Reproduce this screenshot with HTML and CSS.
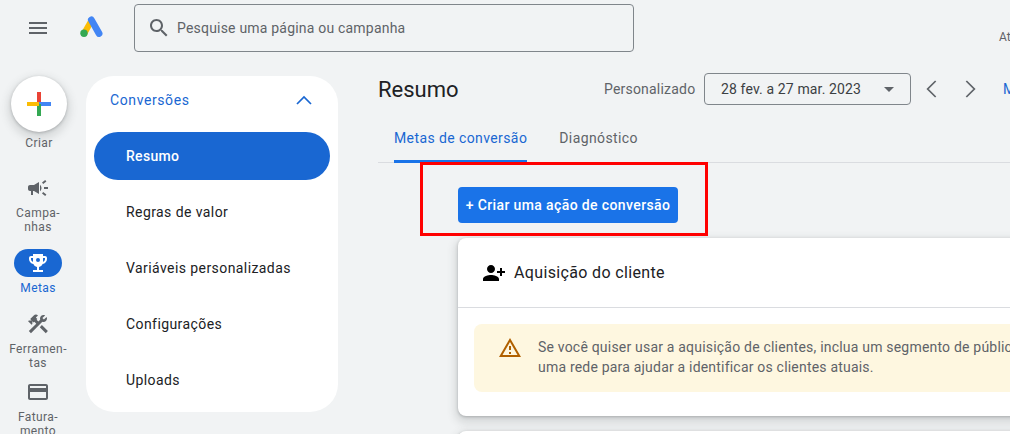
FILE: index.html
```html
<!DOCTYPE html>
<html lang="pt-BR">
<head>
    <meta charset="UTF-8">
    <meta name="viewport" content="width=device-width, initial-scale=1.0">
    <title>Resumo - Conversões</title>
    <link rel="stylesheet" href="styles.css">
</head>
<body>
    <header class="topbar">
        <button class="menu-btn" aria-label="Menu">
            <svg viewBox="0 0 24 24" width="24" height="24"><path d="M3 18h18v-2H3v2zm0-5h18v-2H3v2zm0-7v2h18V6H3z"/></svg>
        </button>
        <svg class="ads-logo" viewBox="0 0 24 24" width="24" height="24">
            <path d="M9.6 3.6 2.2 16.6l5.4 3 7.2-13z" fill="#fbbc04"/>
            <path d="M9.4 5.6a3.4 3.4 0 0 1 5.9-3.4l7.7 13.6a3.4 3.4 0 0 1-5.9 3.4z" fill="#4285f4"/>
            <circle cx="5" cy="17.3" r="3.7" fill="#34a853"/>
        </svg>
        <div class="search">
            <svg viewBox="0 0 24 24" width="24" height="24"><path d="M15.5 14h-.79l-.28-.27C15.41 12.59 16 11.11 16 9.5 16 5.91 13.09 3 9.5 3S3 5.91 3 9.5 5.91 16 9.5 16c1.61 0 3.09-.59 4.23-1.57l.27.28v.79l5 4.99L20.49 19l-4.99-5zm-6 0C7.01 14 5 11.99 5 9.5S7.01 5 9.5 5 14 7.01 14 9.5 11.99 14 9.5 14z"/></svg>
            <span>Pesquise uma página ou campanha</span>
        </div>
        <span class="updated">Atualizado</span>
    </header>

    <div class="layout">
        <!-- left icon rail -->
        <nav class="rail">
            <div class="create">
                <div class="create-btn">
                    <svg viewBox="0 0 24 24" width="24" height="24">
                        <rect x="10" y="0" width="4" height="12" fill="#ea4335"/>
                        <rect x="12" y="10" width="12" height="4" fill="#4285f4"/>
                        <rect x="10" y="12" width="4" height="12" fill="#34a853"/>
                        <rect x="0" y="10" width="12" height="4" fill="#fbbc04"/>
                    </svg>
                </div>
                <span>Criar</span>
            </div>
            <a class="rail-item campaigns">
                <span class="rail-icon"><svg viewBox="0 0 24 24" width="24" height="24"><path d="M18 11v2h4v-2h-4zm-2 6.61c.96.71 2.21 1.65 3.2 2.39.4-.53.8-1.07 1.2-1.6-.99-.74-2.24-1.68-3.2-2.4-.4.54-.8 1.08-1.2 1.61zM20.4 5.6c-.4-.53-.8-1.07-1.2-1.6-.99.74-2.24 1.68-3.2 2.4.4.53.8 1.07 1.2 1.6.96-.72 2.21-1.65 3.2-2.4zM4 9c-1.1 0-2 .9-2 2v2c0 1.1.9 2 2 2h1v4h2v-4h1l5 3V6L8 9H4zm11.5 3c0-1.33-.58-2.53-1.5-3.35v6.69c.92-.81 1.5-2.01 1.5-3.34z"/></svg></span>
                <span>Campa-<br>nhas</span>
            </a>
            <a class="rail-item active">
                <span class="rail-icon"><svg viewBox="0 0 24 24" width="24" height="24"><path fill-rule="evenodd" d="M19 5h-2V3H7v2H5c-1.1 0-2 .9-2 2v1c0 2.55 1.92 4.63 4.39 4.94.63 1.5 1.98 2.63 3.61 2.96V19H7v2h10v-2h-4v-3.1c1.63-.33 2.98-1.46 3.61-2.96C19.08 12.63 21 10.55 21 8V7c0-1.1-.9-2-2-2zM5 8V7h2v3.82C5.84 10.4 5 9.3 5 8zm14 0c0 1.3-.84 2.4-2 2.82V7h2v1zM12 7a2 2 0 1 0 0 4 2 2 0 0 0 0-4z"/></svg></span>
                <span>Metas</span>
            </a>
            <a class="rail-item">
                <span class="rail-icon"><svg viewBox="0 0 24 24" width="24" height="24"><path d="M13.783 15.172l2.121-2.121 5.996 5.996-2.121 2.121zM17.5 10c1.93 0 3.5-1.57 3.5-3.5 0-.58-.16-1.12-.41-1.6l-2.7 2.7-1.49-1.49 2.7-2.7c-.48-.25-1.02-.41-1.6-.41C15.57 3 14 4.57 14 6.5c0 .41.08.8.21 1.16l-1.85 1.85-1.78-1.78.71-.71-1.41-1.41L12 3.49c-1.17-1.17-3.07-1.17-4.24 0L4.22 7.03l1.41 1.41H2.81l-.71.71 3.54 3.54.71-.71V9.15l1.41 1.41.71-.71 1.78 1.78-7.41 7.41 2.12 2.12L16.34 9.79c.36.13.75.21 1.16.21z"/></svg></span>
                <span>Ferramen-<br>tas</span>
            </a>
            <a class="rail-item billing">
                <span class="rail-icon"><svg viewBox="0 0 24 24" width="24" height="24"><path d="M20 4H4c-1.11 0-1.99.89-1.99 2L2 18c0 1.11.89 2 2 2h16c1.11 0 2-.89 2-2V6c0-1.11-.89-2-2-2zm0 14H4v-6h16v6zm0-10H4V6h16v2z"/></svg></span>
                <span>Fatura-<br>mento</span>
            </a>
        </nav>

        <!-- section menu -->
        <aside class="side-menu">
            <div class="side-title">
                <span>Conversões</span>
                <svg viewBox="0 0 24 24" width="24" height="24"><path d="M5 16l7-7 7 7"/></svg>
            </div>
            <a class="side-link selected">Resumo</a>
            <a class="side-link">Regras de valor</a>
            <a class="side-link">Variáveis personalizadas</a>
            <a class="side-link">Configurações</a>
            <a class="side-link">Uploads</a>
        </aside>

        <main class="content">
            <div class="title-row">
                <h1>Resumo</h1>
                <div class="date-tools">
                    <span class="date-label">Personalizado</span>
                    <div class="date-box">
                        <span>28 fev. a 27 mar. 2023</span>
                        <i class="caret"></i>
                    </div>
                    <svg class="arrow" viewBox="0 0 24 24" width="32" height="32"><path d="M15.5 6l-6 6 6 6"/></svg>
                    <svg class="arrow" viewBox="0 0 24 24" width="32" height="32"><path d="M8.5 6l6 6-6 6"/></svg>
                    <a class="more">Mais</a>
                </div>
            </div>

            <div class="tabs">
                <a class="tab current">Metas de conversão</a>
                <a class="tab">Diagnóstico</a>
            </div>

            <div class="action-row">
                <button class="create-action">+ Criar uma ação de conversão</button>
                <div class="highlight"></div>
            </div>

            <section class="card">
                <div class="card-head">
                    <svg viewBox="0 0 24 24" width="24" height="24"><path transform="matrix(-1 0 0 1 24 0)" d="M15 12c2.21 0 4-1.79 4-4s-1.79-4-4-4-4 1.79-4 4 1.79 4 4 4zm-9-2V7H4v3H1v2h3v3h2v-3h3v-2H6zm9 4c-2.67 0-8 1.34-8 4v2h16v-2c0-2.66-5.33-4-8-4z"/></svg>
                    <h2>Aquisição do cliente</h2>
                </div>
                <div class="card-body">
                    <div class="notice">
                        <svg viewBox="0 0 24 24" width="24" height="24"><path d="M12 5.99 19.53 19H4.47L12 5.99M12 2 1 21h22L12 2zm1 14h-2v2h2v-2zm0-6h-2v4h2v-4z"/></svg>
                        <p>Se você quiser usar a aquisição de clientes, inclua um segmento de público<br>uma rede para ajudar a identificar os clientes atuais.</p>
                    </div>
                </div>
            </section>
            <section class="card next-card"></section>
        </main>
    </div>
</body>
</html>
```

FILE: styles.css
```css
html, body {
    height: 434px;
}

body {
    font-family: Roboto, Arial, sans-serif;
    background-color: #f1f3f4;
    color: #202124;
    margin: 0;
    overflow: hidden;
}

a {
    display: block;
}

/* top bar */
.topbar {
    display: flex;
    align-items: center;
    height: 48px;
    padding-top: 4px;
    white-space: nowrap;
}

.topbar > * {
    flex-shrink: 0;
}

.menu-btn {
    background: none;
    border: 0;
    padding: 0;
    margin-left: 26px;
    height: 24px;
    fill: #5f6368;
}

.ads-logo {
    margin-left: 29px;
}

.search {
    display: flex;
    align-items: center;
    width: 500px;
    height: 48px;
    box-sizing: border-box;
    margin-left: 31px;
    padding-left: 12px;
    border: 1px solid #80868b;
    border-radius: 4px;
    fill: #5f6368;
    color: #5f6368;
    font-size: 14px;
    letter-spacing: 0.2px;
}

.search span {
    margin-left: 6px;
}

.updated {
    margin-left: 365px;
    margin-top: 18px;
    font-size: 12px;
    color: #5f6368;
}

.layout {
    display: flex;
    margin-top: 24px;
}

/* icon rail */
.rail {
    width: 78px;
    flex-shrink: 0;
    font-size: 12px;
    line-height: 14px;
    letter-spacing: 0.4px;
    color: #5f6368;
    text-align: center;
}

.create {
    display: flex;
    flex-direction: column;
    align-items: center;
}

.create span {
    margin-top: 4px;
}

.create-btn {
    display: flex;
    align-items: center;
    justify-content: center;
    width: 56px;
    height: 56px;
    border-radius: 50%;
    background-color: #fff;
    box-shadow: 0 1px 3px rgba(60, 64, 67, 0.3), 0 4px 8px 3px rgba(60, 64, 67, 0.15);
}

.rail-item {
    display: flex;
    flex-direction: column;
    align-items: center;
    margin-top: 15px;
    margin-right: 2px;
}

.campaigns {
    margin-top: 24px;
}

.billing {
    margin-top: 8px;
}

.rail-icon {
    display: flex;
    align-items: center;
    justify-content: center;
    width: 48px;
    height: 28px;
    margin-bottom: 4px;
    border-radius: 14px;
    fill: #5f6368;
}

.rail-item.active {
    color: #1967d2;
}

.rail-item.active .rail-icon {
    background-color: #1967d2;
    fill: #fff;
}

/* section menu */
.side-menu {
    display: flex;
    flex-direction: column;
    gap: 8px;
    width: 236px;
    height: 328px;
    flex-shrink: 0;
    margin-left: 8px;
    padding: 0 8px 8px;
    background-color: #fff;
    border-radius: 28px;
}

.side-title {
    display: flex;
    align-items: center;
    justify-content: space-between;
    height: 48px;
    padding: 0 14px 0 16px;
    font-size: 14px;
    letter-spacing: 0.6px;
    color: #1967d2;
}

.side-title svg {
    fill: none;
    stroke: #1967d2;
    stroke-width: 1.7;
}

.side-link {
    height: 48px;
    line-height: 48px;
    padding-left: 32px;
    border-radius: 24px;
    font-size: 14px;
    letter-spacing: 0.42px;
}

.side-link.selected {
    background-color: #1967d2;
    color: #fff;
    font-weight: 500;
    letter-spacing: 0.3px;
}

/* main column */
.content {
    flex-shrink: 0;
    width: 632px;
    margin-left: 40px;
}

.title-row {
    display: flex;
    align-items: center;
    height: 32px;
    margin-top: -3px;
    white-space: nowrap;
}

h1 {
    flex-shrink: 0;
    width: 226px;
    margin: 0;
    font-size: 22px;
    font-weight: 400;
}

.date-tools {
    display: flex;
    align-items: center;
    flex-shrink: 0;
}

.date-label {
    width: 100px;
    font-size: 14px;
    letter-spacing: 0.2px;
    color: #5f6368;
}

.date-box {
    display: flex;
    align-items: center;
    justify-content: space-between;
    box-sizing: border-box;
    width: 207px;
    height: 32px;
    padding: 0 16px;
    border: 1px solid #80868b;
    border-radius: 4px;
    font-size: 14px;
    letter-spacing: 0.13px;
    color: #3c4043;
}

.caret {
    width: 0;
    height: 0;
    border-left: 5px solid transparent;
    border-right: 5px solid transparent;
    border-top: 5px solid #5f6368;
}

.arrow {
    flex-shrink: 0;
    margin-left: 4px;
    fill: none;
    stroke: #5f6368;
    stroke-width: 1.3;
}

.arrow + .arrow {
    margin-left: 8px;
}

.more {
    margin-left: 16px;
    font-size: 14px;
    color: #1967d2;
}

.tabs {
    display: flex;
    height: 47px;
    margin-top: 10px;
    border-bottom: 1px solid #dadce0;
    width: 700px;
}

.tab {
    position: relative;
    line-height: 46px;
    height: 47px;
    margin-left: 16px;
    margin-right: 16px;
    font-size: 14px;
    letter-spacing: 0.4px;
    color: #5f6368;
}

.tab.current {
    color: #1967d2;
    border-bottom: 3px solid #1a73e8;
    border-radius: 3px 3px 0 0;
    height: 45px;
    margin-bottom: -1px;
}

.action-row {
    position: relative;
    padding: 24px 0 15px 80px;
}

.create-action {
    display: block;
    width: 220px;
    height: 36px;
    padding: 0;
    background-color: #1a73e8;
    color: #fff;
    border: 0;
    border-radius: 4px;
    font-family: Roboto, Arial, sans-serif;
    font-size: 14px;
    font-weight: 500;
    letter-spacing: 0.38px;
}

/* red annotation around the button */
.highlight {
    position: absolute;
    left: 42px;
    top: -1px;
    width: 282px;
    height: 68px;
    border: 3px solid #f00;
}

.card {
    width: 700px;
    margin-left: 80px;
    background-color: #fff;
    border-radius: 8px;
    box-shadow: 0 1px 3px rgba(60, 64, 67, 0.3), 0 4px 8px 3px rgba(60, 64, 67, 0.15);
}

.card-head {
    display: flex;
    align-items: center;
    height: 69px;
    padding-left: 24px;
    border-bottom: 1px solid #dadce0;
}

h2 {
    margin: 0 0 0 8px;
    font-size: 16px;
    font-weight: 400;
    letter-spacing: 0.35px;
}

.card-body {
    padding: 16px 0 24px 16px;
}

.notice {
    display: flex;
    gap: 15px;
    height: 68px;
    box-sizing: border-box;
    padding: 12px 0 0 24px;
    background-color: #fef7e0;
    border-radius: 8px;
    fill: #b06000;
    white-space: nowrap;
}

.notice svg {
    flex-shrink: 0;
    margin-right: 1px;
}

.notice p {
    margin: 1px 0 0;
    font-size: 14px;
    line-height: 20px;
    letter-spacing: 0.2px;
    color: #5f6368;
}

.next-card {
    height: 40px;
    margin-top: 15px;
}
```
